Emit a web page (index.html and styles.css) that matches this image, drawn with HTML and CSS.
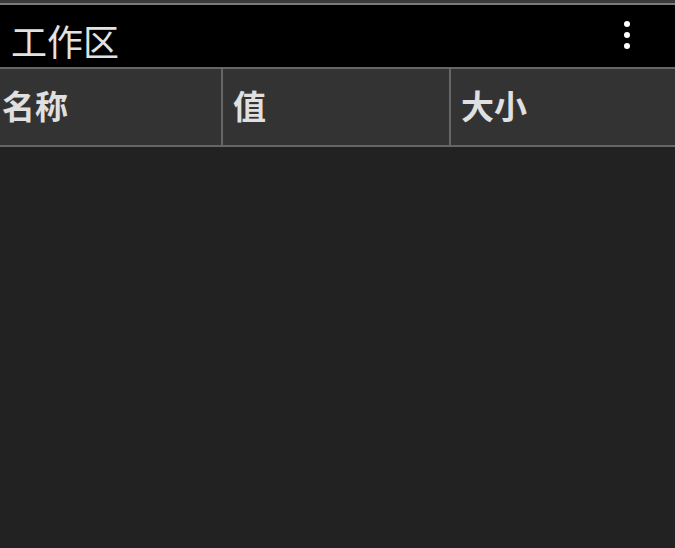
FILE: index.html
```html
<!DOCTYPE html>
<html lang="zh">
<head>
    <meta charset="UTF-8">
    <meta name="viewport" content="width=device-width, initial-scale=1.0">
    <title>工作区</title>
    <link rel="stylesheet" href="styles.css">
</head>
<body>
    <div class="topbar"></div>
    <div class="header">
        <span class="title">工作区</span>
        <button class="menu" aria-label="更多">
            <svg width="8" height="30" viewBox="0 0 8 30"><circle cx="4" cy="4" r="3" fill="#fff"/><circle cx="4" cy="15" r="3" fill="#fff"/><circle cx="4" cy="26" r="3" fill="#fff"/></svg>
        </button>
    </div>
    <div class="table">
        <div class="cols">
            <div class="col first">名称</div>
            <div class="col">值</div>
            <div class="col">大小</div>
        </div>
        <div class="rows"></div>
    </div>
</body>
</html>
```

FILE: styles.css
```css
/* General Styles */
html, body {
    height: 100%;
}
body {
    margin: 0;
    display: flex;
    flex-direction: column;
    background-color: #222;
    color: #e0e0e0;
    font-family: "Noto Sans CJK SC", "Noto Sans", sans-serif;
    overflow: hidden;
}

/* Top strip */
.topbar {
    height: 3px;
    background-color: #3a3a3a;
    border-bottom: 2px solid #7a7a7a;
}

/* Workspace header */
.header {
    height: 62px;
    background-color: #000;
    display: flex;
    align-items: center;
    justify-content: space-between;
    padding: 0 44px 0 11px;
}
.title {
    font-size: 36px;
    line-height: 1;
    color: #e2e2e2;
    padding-top: 7px;
}
.menu {
    background: none;
    border: none;
    padding: 0;
    display: flex;
    margin-top: -2px;
}

/* Table */
.table {
    flex: 1;
    display: flex;
    flex-direction: column;
}
.cols {
    display: grid;
    grid-template-columns: 221px 228px 1fr;
    height: 76px;
    background-color: #333;
    border-top: 2px solid #666;
    border-bottom: 2px solid #666;
}
.col {
    display: flex;
    align-items: center;
    padding-left: 10px;
    padding-bottom: 4px;
    border-left: 2px solid #666;
    font-size: 33px;
    font-weight: bold;
    color: #e0e0e0;
}
.col.first {
    padding-left: 2px;
    border-left: none;
}
.rows {
    flex: 1;
    background-color: #222;
}
```
